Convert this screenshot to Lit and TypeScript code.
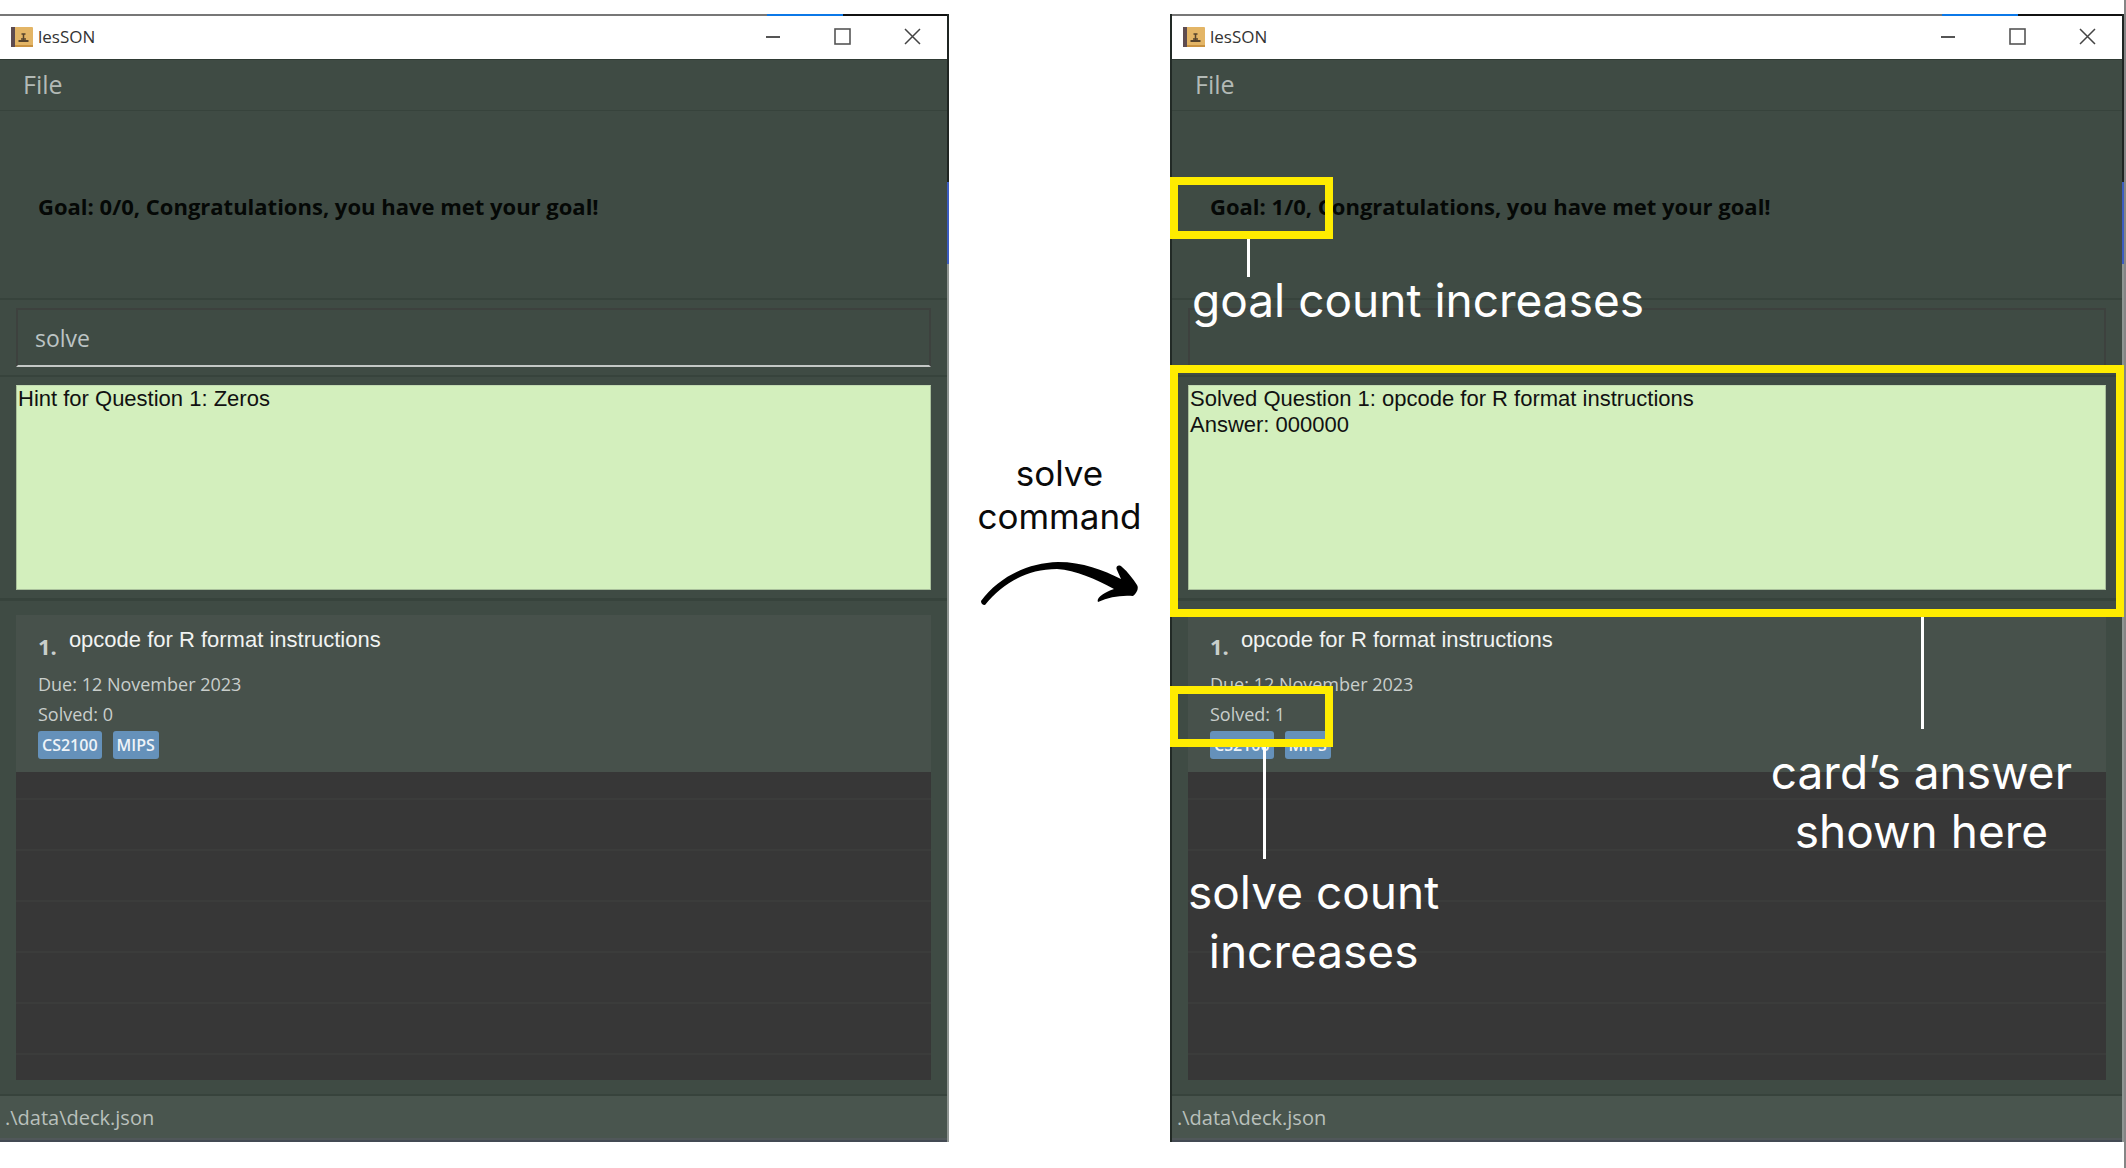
import { LitElement, html, css, svg } from "lit";
import { customElement, property } from "lit/decorators.js";

interface Card {
  index: number;
  question: string;
  due: string;
  solved: number;
  tags: string[];
}

@customElement("deck-window")
export class DeckWindow extends LitElement {
  @property() goal = "0/0";
  @property() command = "";
  @property() result = "";
  @property({ type: Number }) solved = 0;

  static styles = css`
    :host {
      display: flex;
      flex-direction: column;
      min-width: 0;
      box-sizing: border-box;
      padding-right: 2px;
      background:
        linear-gradient(#1f2522 0 168px, #3c5cc0 168px 250px, #8f9592 250px) right / 2px 100% no-repeat,
        #3f4b44;
      color: #c9cecb;
      font-family: "Open Sans", "Noto Sans", sans-serif;
    }
    * {
      box-sizing: border-box;
    }
    button {
      border: 0;
      background: none;
      padding: 0;
      font: inherit;
      color: inherit;
    }
    .edge {
      height: 2px;
      display: grid;
      grid-template-columns: 81fr 8fr 11fr;
      background: #777;
    }
    .edge .accent {
      grid-column: 2;
      background: #0b78e8;
    }
    .edge .dark {
      grid-column: 3;
      background: #111;
    }
    .title {
      height: 43px;
      display: flex;
      align-items: center;
      background: #fff;
      color: #333;
      padding: 0 0 2px 11px;
    }
    .title .name {
      margin: 0 auto 0 5px;
      font-weight: 400;
      font-size: 17px;
    }
    .title button {
      width: 70px;
      height: 41px;
      display: grid;
      place-items: center;
    }
    .menu {
      height: 52px;
      padding: 0 23px 2px;
      display: flex;
      align-items: center;
      border-top: 1px solid #2f3a34;
      border-bottom: 1px solid #37433c;
      font-size: 25px;
      color: #b3bab6;
    }
    .goal {
      height: 189px;
      padding: 0 38px;
      display: flex;
      align-items: center;
      font-size: 22px;
      font-weight: 700;
      color: #050806;
      border-bottom: 2px solid #37433c;
    }
    .goal p {
      margin: 0;
      padding-top: 2px;
    }
    .command {
      padding: 8px 16px;
      height: 77px;
      border-bottom: 2px solid #37433c;
    }
    .command input {
      display: block;
      width: 100%;
      height: 59px;
      background: #3f4b44;
      border: 2px solid #3d413e;
      border-bottom-color: #c4c8c6;
      padding: 0 17px;
      font: 23px "Open Sans", "Noto Sans", sans-serif;
      color: #bcc4c4;
      outline: none;
    }
    .result {
      padding: 8px 16px;
      border-bottom: 3px solid #37433c;
    }
    .result textarea {
      display: block;
      width: 100%;
      height: 205px;
      resize: none;
      outline: none;
      border: 1px solid #a9bf9b;
      border-top-color: #c3dab2;
      background: #d3efbd;
      color: #111;
      padding: 0 1px;
      font: 22px/26px "Liberation Sans", Arial, sans-serif;
      overflow: hidden;
    }
    .list {
      margin: 14px 16px;
      height: 465px;
      background: repeating-linear-gradient(#373737 0 30px, #3b3c3b 30px 32px, #373737 32px 51px);
    }
    .card {
      height: 157px;
      padding: 9px 22px 0;
      background: #47514b;
    }
    .heading {
      display: flex;
      gap: 12px;
      height: 45px;
    }
    .heading .number {
      font-size: 22px;
      font-weight: 700;
      line-height: 44px;
    }
    .heading h2 {
      margin: 0;
      font: 22px/32px "Liberation Sans", Arial, sans-serif;
      color: #f1f3f2;
    }
    .card p {
      margin: 0;
      font-size: 18px;
      line-height: 30px;
    }
    .tags {
      margin: 2px 0 0;
      padding: 0;
      display: flex;
      gap: 11px;
      list-style: none;
    }
    .tags li {
      padding: 0 4px;
      border-radius: 3px;
      background: #6591ba;
      color: #eef3f8;
      font-size: 16px;
      font-weight: 600;
      line-height: 28px;
    }
    .status {
      height: 44px;
      padding: 0 5px;
      border-top: 2px solid #37433c;
      background: #49554e;
      font-size: 20px;
      line-height: 44px;
      color: #b9c0bc;
    }
    .foot {
      height: 4px;
      background: #505759;
      border-bottom: 2px solid #434a53;
    }
  `;

  private renderCard(card: Card) {
    return html`<article class="card">
      <div class="heading">
        <span class="number">${card.index}.</span>
        <h2>${card.question}</h2>
      </div>
      <p>Due: ${card.due}</p>
      <p>Solved: ${card.solved}</p>
      <ul class="tags">
        ${card.tags.map((tag) => html`<li>${tag}</li>`)}
      </ul>
    </article>`;
  }

  render() {
    const card: Card = {
      index: 1,
      question: "opcode for R format instructions",
      due: "12 November 2023",
      solved: this.solved,
      tags: ["CS2100", "MIPS"],
    };
    return html`
      <div class="edge"><span class="accent"></span><span class="dark"></span></div>
      <header class="title">
        <svg width="22" height="20" viewBox="0 0 22 20" aria-hidden="true">
          <rect width="22" height="20" rx="1" fill="#e3b566" />
          <rect width="4" height="20" fill="#5e4c50" />
          <path d="M4 19H22" stroke="#c99240" stroke-width="2" />
          <path d="M7.500 14H17.500" stroke="#57442c" stroke-width="2" />
          <path d="M12.500 13.500V6.500M10.500 7H14.500M10 12H15" stroke="#57442c" stroke-width="1.500" fill="none" />
        </svg>
        <h1 class="name">lesSON</h1>
        <button aria-label="Minimize">
          <svg width="16" height="16" viewBox="0 0 16 16"><path d="M2 8H16" stroke="#555" stroke-width="2" /></svg>
        </button>
        <button aria-label="Maximize">
          <svg width="17" height="17" viewBox="0 0 17 17"><rect x="1" y="1" width="15" height="15" fill="none" stroke="#555" stroke-width="1.600" /></svg>
        </button>
        <button aria-label="Close">
          <svg width="17" height="17" viewBox="0 0 17 17"><path d="M1 1L16 16M16 1L1 16" stroke="#444" stroke-width="1.500" /></svg>
        </button>
      </header>
      <nav class="menu"><button>File</button></nav>
      <section class="goal"><p>Goal: ${this.goal}, Congratulations, you have met your goal!</p></section>
      <div class="command"><input type="text" aria-label="Command" .value=${this.command} /></div>
      <div class="result"><textarea readonly aria-label="Result" .value=${this.result}></textarea></div>
      <main class="list">${this.renderCard(card)}</main>
      <footer class="status">.\\data\\deck.json</footer>
      <div class="foot"></div>
    `;
  }
}

@customElement("app-root")
export class AppRoot extends LitElement {
  static styles = css`
    :host {
      display: block;
      background: #fff;
      font-family: Inter, "Open Sans", sans-serif;
    }
    .board {
      display: grid;
      grid-template-columns: 949fr 221fr 954fr;
      min-height: 100vh;
      align-items: start;
      box-sizing: border-box;
      padding-top: 14px;
      border-right: 2px solid #858585;
    }
    .step {
      display: flex;
      flex-direction: column;
      align-items: center;
      padding-top: 438px;
      font-size: 35px;
      line-height: 43px;
      text-align: center;
      color: #0a0a0a;
    }
    .step p {
      margin: 0 0 24px;
    }
    .after {
      position: relative;
      display: grid;
    }
    .after deck-window {
      border-left: 2px solid #222a26;
    }
    .box {
      position: absolute;
      box-sizing: border-box;
      border: 8px solid #ffec00;
      left: 0;
    }
    .box.goal {
      top: 163px;
      width: 163px;
      height: 62px;
    }
    .box.answer {
      top: 351px;
      right: 0;
      height: 252px;
    }
    .box.solved {
      top: 672px;
      width: 163px;
      height: 61px;
    }
    .pin {
      position: absolute;
      width: 3px;
      background: #fff;
    }
    .pin.goal {
      left: 77px;
      top: 225px;
      height: 38px;
    }
    .pin.answer {
      right: 200px;
      top: 603px;
      height: 112px;
    }
    .pin.solved {
      left: 93px;
      top: 733px;
      height: 112px;
    }
    .note {
      position: absolute;
      margin: 0;
      color: #fff;
      font-size: 46px;
      line-height: 59px;
      text-align: center;
      white-space: nowrap;
    }
    .note.goal {
      left: 22px;
      top: 257px;
    }
    .note.answer {
      right: 52px;
      top: 729px;
    }
    .note.solved {
      left: 18px;
      top: 849px;
    }
  `;

  private arrow() {
    return svg`<svg width="158" height="44" viewBox="0 0 158 44" aria-hidden="true">
      <path d="M0 39C18 15 46 1 77 0C102 0 122 8 140 17L136 8C134 4 138 2 141 5C147 10 152 17 156 23C158 26 156 31 152 34C140 33 128 35 117 40C115 36 122 31 133 27C114 17 95 8 76 7C46 7 22 21 4 43C1 43 0 41 0 39Z" fill="#000"/>
    </svg>`;
  }

  render() {
    return html`<div class="board">
      <deck-window goal="0/0" command="solve" result="Hint for Question 1: Zeros" .solved=${0}></deck-window>
      <div class="step">
        <p>solve<br />command</p>
        ${this.arrow()}
      </div>
      <div class="after">
        <deck-window
          goal="1/0"
          .result=${"Solved Question 1: opcode for R format instructions\nAnswer: 000000"}
          .solved=${1}
        ></deck-window>
        <span class="box goal"></span>
        <span class="box answer"></span>
        <span class="box solved"></span>
        <span class="pin goal"></span>
        <span class="pin answer"></span>
        <span class="pin solved"></span>
        <p class="note goal">goal count increases</p>
        <p class="note answer">card’s answer<br />shown here</p>
        <p class="note solved">solve count<br />increases</p>
      </div>
    </div>`;
  }
}
